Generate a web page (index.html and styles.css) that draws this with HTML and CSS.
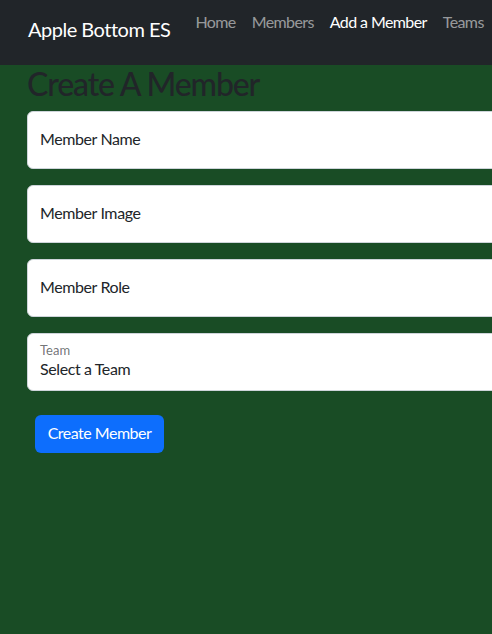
FILE: index.html
```html
<!DOCTYPE html>
<html>
<head>
<meta charset="utf-8">
<link rel="stylesheet" href="styles.css">
</head>
<body>
<nav class="navbar">
  <a class="brand" href="#">Apple Bottom ES</a>
  <ul class="nav-links">
    <li><a class="link" href="#">Home</a></li>
    <li><a class="link" href="#">Members</a></li>
    <li><a class="link active" href="#">Add a Member</a></li>
    <li><a class="link" href="#">Teams</a></li>
  </ul>
</nav>
<main class="content">
  <h1 class="title">Create A Member</h1>
  <form class="form">
    <div class="field"><span class="placeholder">Member Name</span></div>
    <div class="field"><span class="placeholder">Member Image</span></div>
    <div class="field"><span class="placeholder">Member Role</span></div>
    <div class="field select">
      <span class="float-label">Team</span>
      <span class="select-value">Select a Team</span>
    </div>
    <button type="button" class="btn">Create Member</button>
  </form>
</main>
</body>
</html>
```
FILE: styles.css
```css
* { box-sizing: border-box; }
html, body { margin: 0; padding: 0; }
body {
  background: #194c25;
  font-family: Lato, "Noto Sans", sans-serif;
  color: #212529;
  width: 492px;
  height: 634px;
  overflow: hidden;
}
.navbar {
  background: #212529;
  height: 65px;
  display: flex;
  align-items: flex-start;
  padding-left: 28px;
}
.brand {
  color: #fff;
  text-decoration: none;
  font-size: 20px;
  line-height: 24px;
  letter-spacing: -0.5px;
  margin-top: 17px;
  margin-right: 17px;
  white-space: nowrap;
}
.nav-links {
  list-style: none;
  margin: 0;
  padding: 0;
  display: flex;
  margin-top: 10px;
}
.link {
  display: block;
  color: rgba(255,255,255,0.55);
  text-decoration: none;
  font-size: 16px;
  line-height: 24px;
  letter-spacing: -0.6px;
  padding: 0 8px;
  white-space: nowrap;
}
.link.active { color: #fff; }
.content {
  padding-left: 27px;
}
.title {
  margin: 0;
  font-size: 32px;
  font-weight: 500;
  line-height: 38px;
  letter-spacing: -1.1px;
  color: #212529;
  margin-bottom: 8px;
}
.form {
  display: flex;
  flex-direction: column;
}
.field {
  width: 500px;
  height: 58px;
  background: #fff;
  border: 1px solid #ced4da;
  border-radius: 6px;
  margin-bottom: 16px;
  display: flex;
  align-items: center;
  padding: 0 12px 4px;
  font-size: 16px;
  letter-spacing: -0.4px;
}
.select {
  flex-direction: column;
  align-items: flex-start;
  justify-content: flex-start;
  padding-top: 8px;
}
.float-label {
  font-size: 13px;
  line-height: 16px;
  letter-spacing: 0;
  color: rgba(33,37,41,0.65);
}
.select-value {
  font-size: 16px;
  line-height: 22px;
}
.btn {
  align-self: flex-start;
  margin: 8px 0 0 8px;
  background: #0d6efd;
  color: #fff;
  border: none;
  border-radius: 6px;
  height: 38px;
  width: 129px;
  font-family: inherit;
  font-size: 16px;
  letter-spacing: -0.5px;
  padding: 0 0 4px;
}
```
